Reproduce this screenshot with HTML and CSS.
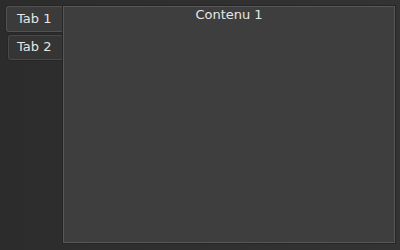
FILE: index.html
```html
<!DOCTYPE html>
<html lang="fr">

<head>
    <meta charset="UTF-8">
    <title>Onglets</title>
    <link rel="stylesheet" href="styles.css">
</head>

<body>
    <div class="tabWidget">
        <div class="tabBar">
            <div class="tab active">Tab 1</div>
            <div class="tab">Tab 2</div>
        </div>
        <div class="pane">
            <div class="label">Contenu 1</div>
        </div>
    </div>
</body>

</html>
```

FILE: styles.css
```css
* {
    margin: 0;
    padding: 0;
    box-sizing: border-box;
}

html,
body {
    width: 400px;
    height: 250px;
}

body {
    background: linear-gradient(to right, #2c2c2c, #333333);
    font-family: "DejaVu Sans", sans-serif;
    font-size: 13px;
    color: #e6e6e6;
}

.tabWidget {
    display: flex;
    height: 250px;
    padding: 6px 5px 7px 6px;
}

.tabBar {
    display: flex;
    flex-direction: column;
    width: 57px;
    gap: 3px;
}

.tab {
    height: 25px;
    margin-left: 2px;
    padding-left: 8px;
    line-height: 22px;
    background-color: #353535;
    border: 1px solid #4a4a4a;
    border-right: none;
    border-radius: 3px 0 0 3px;
    box-shadow: 0 0 0 1px #262626;
}

.tab.active {
    height: 26px;
    margin-left: 0;
    padding-left: 10px;
    line-height: 24px;
    background-color: #3b3b3b;
    border-color: #525252;
}

.pane {
    flex: 1;
    background-color: #3e3e3e;
    border: 1px solid #575757;
    box-shadow: 0 0 0 1px #262626;
}

.label {
    text-align: center;
    line-height: 14px;
    margin-top: 1px;
}
```
